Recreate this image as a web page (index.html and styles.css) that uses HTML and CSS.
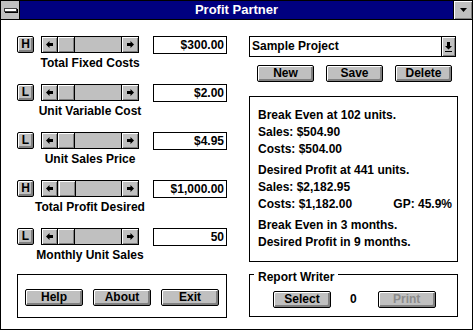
FILE: index.html
```html
<!DOCTYPE html>
<html>
<head>
<meta charset="utf-8">
<title>Profit Partner</title>
<link rel="stylesheet" href="styles.css">
</head>
<body>
<div class="window">
  <div class="titlebar">
    <div class="sysmenu"><span class="sysbar"></span></div>
    <div class="title">Profit Partner</div>
    <div class="minbtn"><svg width="7" height="4" viewBox="0 0 7 4"><path d="M0 0H7L3.5 4Z" fill="#000"/></svg></div>
  </div>
  <div class="client">
    <div class="left">
      <div class="field">
        <div class="ctrl">
          <div class="btn sq">H</div>
          <div class="scroll">
            <div class="sarrow l"><svg width="7" height="7" viewBox="0 0 7 7"><path d="M0 3.5L3.5 0V2H7V5H3.5V7Z" fill="#000"/></svg></div>
            <div class="thumb"></div>
            <div class="sarrow r"><svg width="7" height="7" viewBox="0 0 7 7"><path d="M7 3.5L3.5 0V2H0V5H3.5V7Z" fill="#000"/></svg></div>
          </div>
          <div class="tbox">$300.00</div>
        </div>
        <div class="label">Total Fixed Costs</div>
      </div>
      <div class="field">
        <div class="ctrl">
          <div class="btn sq">L</div>
          <div class="scroll">
            <div class="sarrow l"><svg width="7" height="7" viewBox="0 0 7 7"><path d="M0 3.5L3.5 0V2H7V5H3.5V7Z" fill="#000"/></svg></div>
            <div class="thumb"></div>
            <div class="sarrow r"><svg width="7" height="7" viewBox="0 0 7 7"><path d="M7 3.5L3.5 0V2H0V5H3.5V7Z" fill="#000"/></svg></div>
          </div>
          <div class="tbox">$2.00</div>
        </div>
        <div class="label">Unit Variable Cost</div>
      </div>
      <div class="field">
        <div class="ctrl">
          <div class="btn sq">L</div>
          <div class="scroll">
            <div class="sarrow l"><svg width="7" height="7" viewBox="0 0 7 7"><path d="M0 3.5L3.5 0V2H7V5H3.5V7Z" fill="#000"/></svg></div>
            <div class="thumb"></div>
            <div class="sarrow r"><svg width="7" height="7" viewBox="0 0 7 7"><path d="M7 3.5L3.5 0V2H0V5H3.5V7Z" fill="#000"/></svg></div>
          </div>
          <div class="tbox">$4.95</div>
        </div>
        <div class="label">Unit Sales Price</div>
      </div>
      <div class="field">
        <div class="ctrl">
          <div class="btn sq">H</div>
          <div class="scroll">
            <div class="sarrow l"><svg width="7" height="7" viewBox="0 0 7 7"><path d="M0 3.5L3.5 0V2H7V5H3.5V7Z" fill="#000"/></svg></div>
            <div class="thumb" style="margin-left:1px"></div>
            <div class="sarrow r"><svg width="7" height="7" viewBox="0 0 7 7"><path d="M7 3.5L3.5 0V2H0V5H3.5V7Z" fill="#000"/></svg></div>
          </div>
          <div class="tbox">$1,000.00</div>
        </div>
        <div class="label">Total Profit Desired</div>
      </div>
      <div class="field last">
        <div class="ctrl">
          <div class="btn sq">L</div>
          <div class="scroll">
            <div class="sarrow l"><svg width="7" height="7" viewBox="0 0 7 7"><path d="M0 3.5L3.5 0V2H7V5H3.5V7Z" fill="#000"/></svg></div>
            <div class="thumb"></div>
            <div class="sarrow r"><svg width="7" height="7" viewBox="0 0 7 7"><path d="M7 3.5L3.5 0V2H0V5H3.5V7Z" fill="#000"/></svg></div>
          </div>
          <div class="tbox">50</div>
        </div>
        <div class="label">Monthly Unit Sales</div>
      </div>
      <div class="group">
        <div class="btn wide">Help</div>
        <div class="btn wide">About</div>
        <div class="btn wide">Exit</div>
      </div>
    </div>
    <div class="right">
      <div class="combo">
        <div class="combo-text">Sample Project</div>
        <div class="combo-btn"><svg width="7" height="10" viewBox="0 0 7 10"><path d="M2 0H5V4H7L3.5 7.5L0 4H2Z" fill="#000"/><rect x="0" y="9" width="7" height="1" fill="#000"/></svg></div>
      </div>
      <div class="btnrow">
        <div class="btn mid">New</div>
        <div class="btn mid">Save</div>
        <div class="btn mid">Delete</div>
      </div>
      <div class="results">
        <div class="grp">
          <div>Break Even at 102 units.</div>
          <div>Sales: $504.90</div>
          <div>Costs: $504.00</div>
        </div>
        <div class="grp">
          <div>Desired Profit at 441 units.</div>
          <div>Sales: $2,182.95</div>
          <div class="split"><span>Costs: $1,182.00</span><span>GP: 45.9%</span></div>
        </div>
        <div class="grp">
          <div>Break Even in 3 months.</div>
          <div>Desired Profit in 9 months.</div>
        </div>
      </div>
      <div class="report">
        <span class="legend">Report Writer</span>
        <div class="btn wide">Select</div>
        <span class="count">0</span>
        <div class="btn wide disabled">Print</div>
      </div>
    </div>
  </div>
</div>
</body>
</html>
```

FILE: styles.css
```css
* { box-sizing: border-box; }
html, body { margin: 0; padding: 0; background: #fff; }
body {
  font-family: "Liberation Sans", Arial, sans-serif;
  font-weight: 700;
  font-size: 12px;
  color: #000;
}
.window {
  width: 473px;
  height: 330px;
  border: 1px solid #000;
  display: flex;
  flex-direction: column;
  background: #fff;
}
.titlebar {
  height: 19px;
  flex: none;
  display: flex;
  background: #000080;
  border-bottom: 1px solid #000;
}
.sysmenu {
  width: 19px;
  border-right: 1px solid #000;
  background: #c0c0c0;
  display: flex;
  align-items: center;
  justify-content: center;
}
.sysbar {
  width: 13px;
  height: 4px;
  background: #fff;
  border: 1px solid #404040;
  box-shadow: 1px 1px 0 #000;
  margin-top: -1px;
}
.title {
  flex: 1;
  color: #fff;
  font-size: 13px;
  text-align: center;
  line-height: 18px;
}
.minbtn {
  width: 19px;
  border-left: 1px solid #000;
  background: #c0c0c0;
  display: flex;
  align-items: center;
  justify-content: center;
  box-shadow: inset 1px 1px 0 #fff, inset -1px -1px 0 #808080;
}
.client {
  display: flex;
  padding: 16px 0 0 16px;
}
.left {
  width: 210px;
  display: flex;
  flex-direction: column;
}
.field {
  display: flex;
  flex-direction: column;
  margin-bottom: 13px;
}
.field.last { margin-bottom: 11px; }
.ctrl {
  display: flex;
  height: 17px;
  align-items: flex-start;
}
.btn {
  height: 17px;
  border: 1px solid #000;
  border-radius: 2px;
  background: #c0c0c0;
  box-shadow: inset 1px 1px 0 #fff, inset -1px -1px 0 #808080, inset -2px -2px 0 #808080;
  display: flex;
  align-items: center;
  justify-content: center;
  line-height: 14px;
  padding-bottom: 1px;
}
.btn.sq { width: 17px; }
.btn.wide { width: 58px; }
.btn.mid { width: 57px; }
.btn.disabled { color: #8c8c8c; }
.scroll {
  width: 98px;
  height: 17px;
  margin-left: 7px;
  border: 1px solid #000;
  display: flex;
  background: #c0c0c0;
}
.sarrow {
  width: 16px;
  display: flex;
  align-items: center;
  justify-content: center;
  background: #c0c0c0;
  box-shadow: inset 1px 1px 0 #fff, inset -1px -1px 0 #808080;
}
.sarrow.l { border-right: 1px solid #000; }
.sarrow.r { border-left: 1px solid #000; margin-left: auto; width: 17px; }
.thumb {
  width: 17px;
  border-right: 1px solid #000;
  background: #c0c0c0;
  box-shadow: inset 1px 1px 0 #fff, inset -1px -1px 0 #808080;
}
.tbox {
  width: 74px;
  height: 18px;
  margin-left: 14px;
  border: 1px solid #000;
  background: #fff;
  text-align: right;
  padding-right: 2px;
  line-height: 16px;
  white-space: nowrap;
}
.label {
  width: 146px;
  margin-top: 2px;
  line-height: 16px;
  text-align: center;
  white-space: nowrap;
}
.group {
  height: 44px;
  border: 1px solid #000;
  display: flex;
  justify-content: space-between;
  align-items: flex-start;
  padding: 14px 7px 0 7px;
}
.right {
  width: 209px;
  margin-left: 22px;
  display: flex;
  flex-direction: column;
}
.combo {
  width: 207px;
  height: 21px;
  border: 1px solid #000;
  display: flex;
}
.combo-text {
  flex: 1;
  padding-left: 2px;
  line-height: 19px;
}
.combo-btn {
  width: 14px;
  border-left: 1px solid #000;
  background: #c0c0c0;
  box-shadow: inset 1px 1px 0 #fff, inset -1px -1px 0 #808080;
  display: flex;
  align-items: center;
  justify-content: center;
}
.btnrow {
  display: flex;
  gap: 12px;
  margin-top: 8px;
  padding-left: 8px;
}
.results {
  margin-top: 14px;
  height: 166px;
  border: 1px solid #000;
  padding: 10px 5px 0 8px;
  line-height: 17px;
}
.grp + .grp { margin-top: 4px; }
.split {
  display: flex;
  justify-content: space-between;
}
.report {
  position: relative;
  margin-top: 12px;
  height: 43px;
  border: 1px solid #000;
  display: flex;
  align-items: flex-start;
  padding: 16px 0 0 23px;
}
.legend {
  position: absolute;
  top: -5px;
  left: 4px;
  padding: 0 4px;
  background: #fff;
  line-height: 14px;
}
.count {
  margin-left: 19px;
  margin-right: 21px;
  line-height: 16px;
}
```
